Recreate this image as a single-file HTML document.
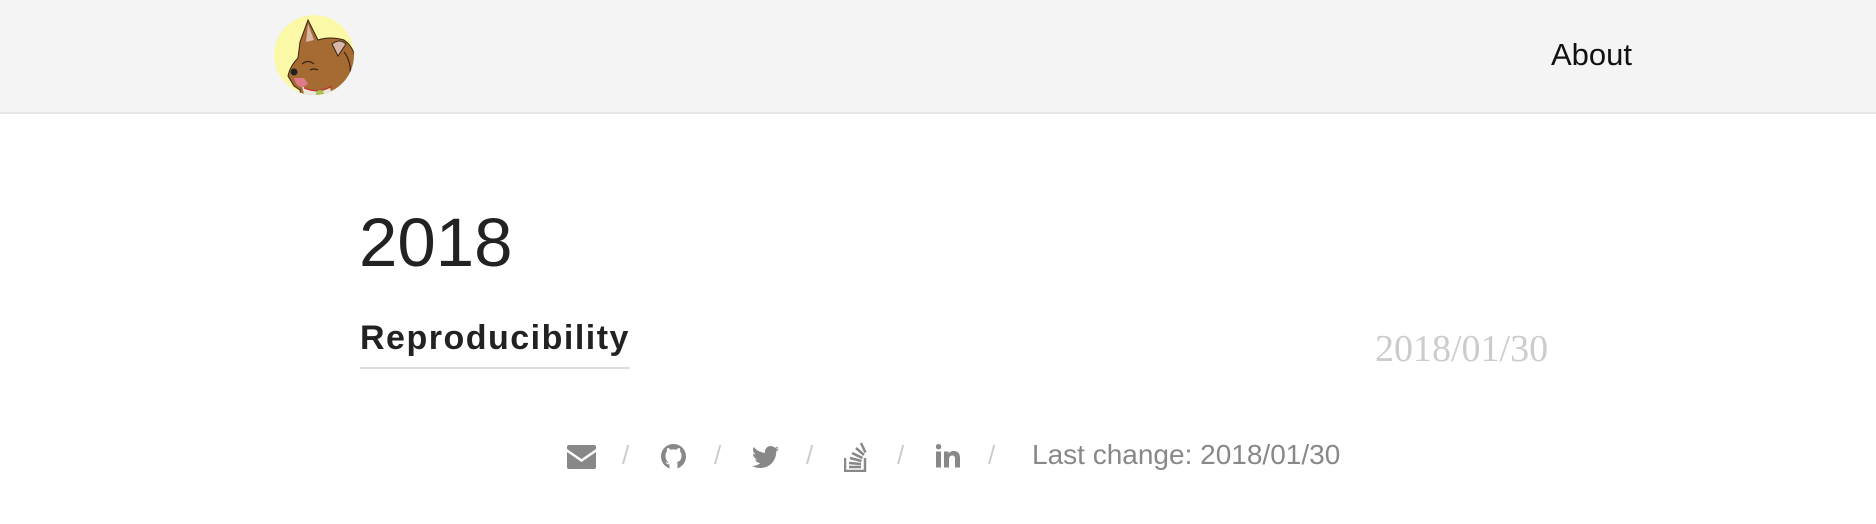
<!DOCTYPE html>
<html><head><meta charset="utf-8"><style>
html,body{margin:0;padding:0;width:1876px;height:524px;overflow:hidden;background:#fff;font-family:"Liberation Sans",sans-serif;}
.hdr{position:absolute;left:0;top:0;width:1876px;height:112px;background:#f4f4f4;border-bottom:2px solid #e6e6e6;}
.abs{position:absolute;white-space:nowrap;}
.sl{position:absolute;top:440px;font-size:26px;color:#ccc;}
</style></head><body>
<div class="hdr"></div>
<svg class="abs" style="left:274px;top:12px" width="80" height="86" viewBox="0 0 80 86">
<defs><clipPath id="c"><circle cx="40" cy="43" r="40"/></clipPath></defs>
<circle cx="40" cy="43" r="40" fill="#fbf8a8"/>
<g clip-path="url(#c)">
<path d="M34 8 L44 28 Q56 24 70 28 Q82 36 82 55 L82 90 L28 90 L26 78 L20 74 L14 64 Q16 54 24 46 L26 30 Z" fill="#a66a33" stroke="#3a2410" stroke-width="1"/>
<path d="M34 12 L40 28 L32 30 Z" fill="#d8b8a8"/>
<path d="M58 32 Q66 26 72 32 L64 44 Z" fill="#d8b8a8" stroke="#3a2410" stroke-width="1"/>
<path d="M28 74 Q40 84 56 76 L60 90 L32 90 Z" fill="#ece8dc"/>
<path d="M30 76 Q44 82 58 74" stroke="#c03030" stroke-width="1.2" fill="none"/>
<circle cx="46" cy="82" r="4" fill="#a8c050"/>
<path d="M20 66 Q24 80 34 72 L30 66 Z" fill="#e07a8a"/>
<circle cx="20" cy="60" r="3.5" fill="#222"/>
<path d="M28 52 Q34 47 40 52 M36 58 Q40 56 44 58 M70 40 Q78 50 76 66" stroke="#3a2410" stroke-width="1.2" fill="none"/>
</g></svg>
<div class="abs" style="left:1551px;top:37px;font-size:31px;color:#111;">About</div>
<div class="abs" style="left:359px;top:208px;font-size:69px;line-height:1;color:#222;">2018</div>
<div class="abs" style="left:360px;top:321px;font-size:34px;font-weight:bold;line-height:1;letter-spacing:1.5px;color:#222;">Reproducibility</div>
<div class="abs" style="left:360px;top:367px;width:270px;height:2px;background:#ddd;"></div>
<div class="abs" style="left:1375px;top:330px;font-family:'Liberation Serif',serif;font-size:38px;line-height:1;color:#ccc;">2018/01/30</div>

<svg class="abs" style="left:567px;top:445px" width="29" height="24" viewBox="0 0 29 24"><path d="M0 2 Q0 0 2 0 H27 Q29 0 29 2 V4 L14.5 14 L0 4 Z M0 7 L14.5 17 L29 7 V22 Q29 24 27 24 H2 Q0 24 0 22 Z" fill="#888"/></svg>
<div class="sl" style="left:622px">/</div>
<svg class="abs" style="left:661px;top:444px" width="25" height="26" viewBox="0 0 25 26"><path d="M12.5 0 C5.5 0 0 5.5 0 12.5 C0 18 3.5 22.5 8.5 24.5 L8.5 20.5 C6 20.5 5 19 4.5 18 C5.5 18 6.5 19 7.5 19.5 C7 17.5 4.5 16.5 4.5 11.5 C4.5 9.5 5 8.5 6 7.5 C5.7 6.5 5.7 5 6.3 4 C7.8 4 9 5 9.8 5.7 C11.5 5.2 13.5 5.2 15.2 5.7 C16 5 17.2 4 18.7 4 C19.3 5 19.3 6.5 19 7.5 C20 8.5 20.5 9.5 20.5 11.5 C20.5 16.5 18 17.5 16 18 C16.5 18.5 16.5 19.5 16.5 20.5 L16.5 24.5 C21.5 22.5 25 18 25 12.5 C25 5.5 19.5 0 12.5 0 Z" fill="#888"/></svg>
<div class="sl" style="left:714px">/</div>
<svg class="abs" style="left:752px;top:446px" width="27" height="22" viewBox="0 0 27 22"><path d="M27 2.6 C26 3 25 3.3 23.8 3.4 C25 2.7 25.8 1.6 26.3 0.4 C25.2 1 24 1.5 22.8 1.7 C21.7 0.6 20.2 0 18.6 0 C15.5 0 13 2.5 13 5.5 C13 6 13.1 6.4 13.2 6.8 C8.6 6.6 4.5 4.4 1.8 1 C1.3 1.8 1 2.8 1 3.8 C1 5.7 2 7.4 3.5 8.4 C2.6 8.4 1.7 8.1 1 7.7 C1 10.5 2.9 12.7 5.5 13.2 C4.7 13.5 3.8 13.5 3 13.3 C3.7 15.5 5.8 17.1 8.2 17.2 C6 19 3.4 19.9 0.5 19.9 C0.3 19.9 0.2 19.9 0 19.9 C2.5 21.5 5.4 22 8.5 22 C18.6 22 24.2 13.6 24.2 6.3 L24.2 5.6 C25.3 4.8 26.2 3.8 27 2.6 Z" fill="#888"/></svg>
<div class="sl" style="left:806px">/</div>
<svg class="abs" style="left:844px;top:440px" width="25" height="32" viewBox="0 0 25 32"><path d="M1 18 V31 H21 V18" stroke="#888" stroke-width="2.5" fill="none"/><path d="M5 27 H17 M5 23 L17 24 M6 18 L17.5 21 M8 13 L18.5 18 M12 8 L20 15 M17 3 L21.5 12.5" stroke="#888" stroke-width="2.5" fill="none"/></svg>
<div class="sl" style="left:897px">/</div>
<svg class="abs" style="left:936px;top:444px" width="24" height="24" viewBox="0 0 24 24"><rect x="0" y="7.5" width="5" height="16" fill="#888"/><circle cx="2.5" cy="2.7" r="2.7" fill="#888"/><path d="M8 7.5 H12.6 V9.7 C13.4 8.3 15 7 17.5 7 C22 7 24 9.5 24 14 V23.5 H19 V15 C19 12.8 18.3 11.5 16.4 11.5 C14.3 11.5 13 13 13 15 V23.5 H8 Z" fill="#888"/></svg>
<div class="sl" style="left:988px">/</div>
<div class="abs" style="left:1032px;top:441px;font-size:28px;line-height:1;color:#888;">Last change: 2018/01/30</div>
</body></html>
